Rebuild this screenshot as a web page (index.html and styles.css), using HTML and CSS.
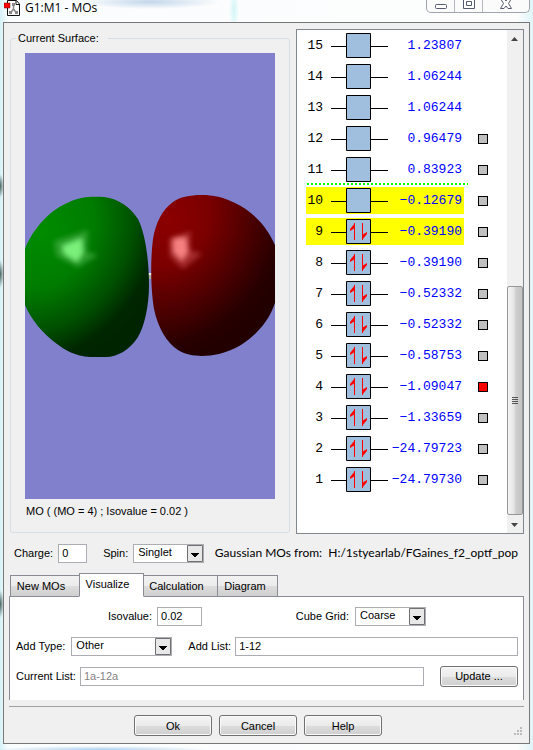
FILE: index.html
```
<!DOCTYPE html>
<html lang="en">
<head>
<meta charset="utf-8">
<title>G1:M1 - MOs</title>
<link rel="stylesheet" href="styles.css">
</head>
<body>
<header class="titlebar">
  <svg class="app-icon" width="16" height="16" viewBox="0 0 16 16" aria-hidden="true">
    <path d="M3.500.5H12.500L15.500 4V15.500H3.500Z" fill="#fff" stroke="#111"/>
    <path d="M12 1v3.500h3" fill="none" stroke="#111"/>
    <path d="M9.500 4v5M9.500 9l-3 4M9.500 9l3 4" stroke="#888" stroke-width="1.500"/>
    <path d="M8 3h3v3h-3zM5 11h3v3h-3zM11 11h3v3h-3z" fill="#888"/>
    <path d="M0 3h6v5H0z" fill="#f00" stroke="#600" stroke-width=".5"/>
  </svg>
  <h1>G1:M1 - MOs</h1>
  <div class="caption-buttons">
    <button type="button" aria-label="Minimize"><svg width="12" height="12" viewBox="0 0 12 12"><rect x=".5" y="6.500" width="11" height="4" rx="1" fill="#fff" stroke="#555b6e"/></svg></button>
    <button type="button" aria-label="Maximize"><svg width="12" height="12" viewBox="0 0 12 12"><path d="M.5-2.500h11v13H.5zM3.500 3.500h5v4h-5z" fill="#fff" stroke="#555b6e"/></svg></button>
    <button type="button" class="close" aria-label="Close"><svg width="12" height="12" viewBox="0 0 12 12"><path d="M.5.5h3.500L6 3 8 .5h3.500L8.500 5.500l3 5H8L6 8 4 10.500H.5l3-5z" fill="#fff" stroke="#555b6e"/></svg></button>
  </div>
</header>
<main class="dialog">
  <div class="views">
    <fieldset class="surface">
      <legend>Current Surface:</legend>
      <svg class="canvas" viewBox="25 53 250 446" role="img" aria-label="Molecular orbital surface">
        <defs>
          <radialGradient id="green" gradientUnits="userSpaceOnUse" cx="42" cy="231" r="125" gradientTransform="rotate(32 42 231) scale(1 1.200) translate(0 -38)">
            <stop offset="0" stop-color="#008c00"/><stop offset=".4" stop-color="#007c00"/><stop offset=".7" stop-color="#005000"/><stop offset=".9" stop-color="#002700"/><stop offset="1" stop-color="#002400"/>
          </radialGradient>
          <radialGradient id="red" gradientUnits="userSpaceOnUse" cx="168" cy="222" r="126" gradientTransform="rotate(32 168 222) scale(1 1.200) translate(0 -37)">
            <stop offset="0" stop-color="#8c0000"/><stop offset=".3" stop-color="#7c0000"/><stop offset=".6" stop-color="#500000"/><stop offset=".88" stop-color="#270000"/><stop offset="1" stop-color="#220000"/>
          </radialGradient>
          <filter id="soft" x="-50%" y="-50%" width="200%" height="200%"><feGaussianBlur stdDeviation="2.500"/></filter>
        </defs>
        <rect x="25" y="53" width="250" height="446" fill="#8080cc"/>
        <path d="M147 273h6v6h-6z" fill="#aaa"/><path d="M147 273h6v2h-6z" fill="#eee"/>
        <path d="M25 249C33 228 50 211 65 204C78 197 90 196 104 197C119 199 130 207 138 219C146 235 149 263 149 285C149 307 144 327 138 337C130 350 117 357 106 357H90C75 356 65 350 57 344C42 333 31 319 25 305Z" fill="url(#green)"/>
        <path d="M275 245C266 224 250 210 235 203C223 197 213 195 202 195C189 195 180 197 173 202C162 210 156 222 153 239C150 262 151 291 154 309C158 328 167 343 178 350C189 357 205 357 219 354C235 350 247 342 256 333C266 323 271 314 275 303Z" fill="url(#red)"/>
        <g filter="url(#soft)">
          <path d="M54 241L88 230L87 252L98 255L78 267L56 256Z" fill="#3ba83b" opacity=".75"/>
          <path d="M62 246L82 238L83 253L77 262L64 254Z" fill="#8f8" opacity=".85"/>
          <path d="M169 239L191 231L190 250L202 254L183 269L170 257Z" fill="#b63b3b" opacity=".7"/>
          <path d="M173 238L186 237L188 252L182 261L173 252Z" fill="#f88" opacity=".9"/>
        </g>
      </svg>
      <p>MO ( (MO = 4) ; Isovalue = 0.02 )</p>
    </fieldset>
    <section class="levels" aria-label="Orbital energies">
      <ol id="orbitals"></ol>
      <div class="scrollbar" aria-hidden="true">
        <svg width="16" height="16" viewBox="0 0 16 16"><path d="M4 11L7.500 7L11 11Z" fill="#444"/></svg>
        <div class="thumb"><i></i><i></i><i></i><i></i></div>
        <svg width="16" height="16" viewBox="0 0 16 16"><path d="M4 6L7.500 10L11 6Z" fill="#444"/></svg>
      </div>
    </section>
  </div>
  <div class="state">
    <label for="charge">Charge:</label><input id="charge" value="0">
    <label for="spin">Spin:</label><select id="spin"><option>Singlet</option></select>
    <span class="source">Gaussian MOs from:&nbsp; H:/1styearlab/FGaines_f2_optf_pop</span>
  </div>
  <div class="tabs" role="tablist">
    <button type="button" role="tab">New MOs</button>
    <button type="button" role="tab" class="active" aria-selected="true">Visualize</button>
    <button type="button" role="tab" class="wide">Calculation</button>
    <button type="button" role="tab">Diagram</button>
  </div>
  <section class="tab-panel" role="tabpanel">
    <div class="row grid-row">
      <label for="iso">Isovalue:</label><input id="iso" value="0.02">
      <label for="cube" class="cube-label">Cube Grid:</label><select id="cube"><option>Coarse</option></select>
    </div>
    <div class="row">
      <label for="type">Add Type:</label><select id="type"><option>Other</option></select>
      <label for="list" class="list-label">Add List:</label><input id="list" class="grow" value="1-12">
    </div>
    <div class="row">
      <label for="current">Current List:</label><input id="current" class="grow" value="1a-12a" disabled>
      <button type="button" class="push update">Update ...</button>
    </div>
  </section>
  <footer class="actions">
    <button type="button" class="push">Ok</button>
    <button type="button" class="push">Cancel</button>
    <button type="button" class="push">Help</button>
    <svg class="grip" width="9" height="9" viewBox="0 0 9 9" aria-hidden="true"><path d="M6 0h2v2H6zM3 3h2v2H3zM6 3h2v2H6zM0 6h2v2H0zM3 6h2v2H3zM6 6h2v2H6z" fill="#bbb"/></svg>
  </footer>
</main>
<script src="orbitals.js"></script>
</body>
</html>
```
FILE: styles.css
```
* { box-sizing: border-box; }
body {
  margin: 0;
  padding: 0 3px 6px;
  min-height: 100vh;
  display: flex;
  flex-direction: column;
  font: 11px/14px "Liberation Sans", sans-serif;
  color: #000;
  background:
    radial-gradient(ellipse 4px 12px at 0 186px, #46605a, transparent),
    radial-gradient(ellipse 4px 14px at 0 274px, #46605a, transparent),
    radial-gradient(ellipse 4px 14px at 0 604px, #46605a, transparent),
    radial-gradient(ellipse 70px 7px at 150px 2px, #c3d6ea, transparent),
    radial-gradient(ellipse 110px 4px at 100px 100%, #a9cdec, transparent),
    radial-gradient(ellipse 5px 24px at 234px 10px, #d3f5f7, transparent),
    linear-gradient(90deg, #d5f2f8 0, #fafdfe 8px, #fdfdfd 97%, #dff4f8 100%);
}
button, input, select { font: inherit; color: inherit; margin: 0; }
.titlebar { display: flex; align-items: flex-start; height: 22px; padding-left: 1px; }
.titlebar h1 { margin: 0 auto 0 5px; font: 12px/16px "Open Sans", sans-serif; }
.caption-buttons {
  display: flex;
  height: 13px;
  border: 1px solid #a0a4ac;
  border-top: 0;
  border-radius: 0 0 5px 5px;
  background: #fbfbfc;
}
.caption-buttons button {
  width: 28px;
  height: 12px;
  padding: 0;
  border: 0;
  border-right: 1px solid #b5b8bf;
  background: none;
  line-height: 0;
}
.caption-buttons svg { display: block; margin: -4px auto 0; }
.caption-buttons .close { width: 46px; border: 0; }
.dialog {
  flex: 1;
  display: flex;
  flex-direction: column;
  padding: 6px 5px 0;
  border: 1px solid #777;
  background: #f0f0f0;
}
.views { display: flex; gap: 6px; }
.surface {
  flex: 1;
  min-width: 0;
  margin: 2px 0 1px 1px;
  padding: 8px 14px 14px;
  border: 1px solid #d5dfe5;
  border-radius: 3px;
}
.surface legend { height: 14px; margin-left: -9px; padding: 0 9px 0 2px; }
.canvas { display: block; width: 100%; }
.surface p { margin: 5px 1px 0; }
.levels {
  flex: 0 0 228px;
  display: flex;
  justify-content: space-between;
  border: 1px solid #82878f;
  background: #fff;
}
.levels ol {
  display: flex;
  flex-direction: column;
  gap: 4px;
  margin: 0;
  padding: 2px 0 0 9px;
  list-style: none;
}
.orbital {
  position: relative;
  display: flex;
  align-items: center;
  height: 27px;
  font: 13px/27px "Liberation Mono", monospace;
}
.level { display: flex; align-items: center; width: 158px; height: 27px; padding-right: 2px; }
.highlight { background: #ff0; }
.number { width: 17px; margin-right: 8px; text-align: right; }
.energy { flex: 1; color: #00f; text-align: right; }
.level svg { flex: none; margin-right: -8px; }
.mark { width: 10px; height: 10px; margin-left: 14px; border: 1px solid #000; background: #c0c0c0; }
.mark.selected { background: #f00; }
.lumo::before {
  content: "";
  position: absolute;
  top: -4px;
  left: 1px;
  width: 161px;
  height: 2px;
  background: repeating-linear-gradient(90deg, #0f0 0 2px, #fff 2px 4px);
}
.scrollbar { display: flex; flex-direction: column; width: 16px; background: #f0f0f0; }
.thumb {
  display: flex;
  flex-direction: column;
  justify-content: center;
  align-items: center;
  gap: 1px;
  height: 229px;
  margin: auto 0 2px;
  border: 1px solid #979797;
  border-radius: 2px;
  background: linear-gradient(90deg, #f5f5f5, #e3e3e3 45%, #cfcfcf 55%, #c3c3c3);
}
.thumb i { width: 6px; height: 1px; background: #555; }
.state { display: flex; align-items: center; margin: 9px 6px 0 5px; height: 20px; }
input, select {
  height: 19px;
  border: 1px solid #abadb3;
  border-radius: 0;
  background: #fff;
}
input { padding: 0 3px; min-width: 0; }
select {
  appearance: none;
  padding: 0 4px 2px;
  background: #fff url("data:image/svg+xml,%3Csvg xmlns='http://www.w3.org/2000/svg' width='16' height='17'%3E%3Cpath d='M.5.5h15v16H.5z' fill='%23e8e8e8' stroke='%23707070'/%3E%3Cpath d='M4 8h8v1H4zM5 9h6v1H5zM6 10h4v1H6zM7 11h2v1H7z'/%3E%3C/svg%3E") no-repeat right top;
}
#charge { width: 29px; margin: 0 16px 0 5px; }
#spin { width: 71px; margin-left: 5px; }
.source { margin-left: auto; font: 12px/16px Lato, "Open Sans", sans-serif; white-space: nowrap; }
.tabs { display: flex; align-items: flex-end; height: 24px; margin: 10px 0 -1px 1px; }
.tabs button {
  position: relative;
  height: 22px;
  width: 61px;
  padding: 0 5px 1px 0;
  margin-left: -1px;
  border: 1px solid #898c95;
  background: linear-gradient(#f2f2f2, #ebebeb 50%, #ddd 50%, #cfcfcf);
}
.tabs button:first-child { width: 70px; margin-left: 0; padding-right: 8px; }
.tabs .active { width: 65px; height: 24px; padding: 0 8px 3px 0; background: #fff; border-bottom-color: #fff; z-index: 1; }
.tabs .wide { width: 75px; padding-right: 8px; }
.tab-panel {
  display: flex;
  flex-direction: column;
  gap: 8px;
  padding: 8px 5px 13px 6px;
  border: 1px solid #898c95;
  border-bottom: 0;
  background: #fff;
}
.row { display: flex; align-items: center; height: 22px; }
.grow { flex: 1; }
.grid-row { padding-left: 92px; }
#iso { width: 45px; margin-left: 5px; }
.cube-label { margin-left: auto; }
#cube { width: 71px; margin: 0 92px 0 6px; }
#type { width: 101px; margin-left: 6px; }
.list-label { margin: 0 4px 0 16px; }
#current { margin-left: 4px; color: #838383; }
.push {
  width: 78px;
  height: 21px;
  padding: 0;
  border: 1px solid #707070;
  border-radius: 3px;
  background: linear-gradient(#f4f4f4, #ebebeb 50%, #ddd 50%, #cfcfcf);
  box-shadow: inset 0 0 0 1px #fbfbfb;
}
.update { margin-left: 16px; }
.actions {
  position: relative;
  display: flex;
  justify-content: center;
  gap: 7px;
  margin-top: 6px;
  padding: 8px 17px 7px 0;
  border-top: 1px solid #a0a0a0;
}
.grip { position: absolute; right: 1px; bottom: 7px; }
```
FILE: orbitals.js
```
const energies = [
  [15, "1.23807"], [14, "1.06244"], [13, "1.06244"], [12, "0.96479"],
  [11, "0.83923"], [10, "−0.12679"], [9, "−0.39190"], [8, "−0.39190"],
  [7, "−0.52332"], [6, "−0.52332"], [5, "−0.58753"], [4, "−1.09047"],
  [3, "−1.33659"], [2, "−24.79723"], [1, "−24.79730"]
];
const electrons = '<path d="M23.500 4v17M31.500 4v17" stroke="#f00"/><path d="M24 4v5l-5 3v-2zM31 21v-5l5-3v2z" fill="#f00"/>';
document.getElementById("orbitals").innerHTML = energies.map(([n, e]) => `
  <li class="orbital${n === 10 ? " lumo" : ""}">
    <div class="level${n === 10 || n === 9 ? " highlight" : ""}">
      <span class="number">${n}</span>
      <svg width="57" height="25" viewBox="0 0 57 25"><path d="M0 13.500h57" stroke="#000"/><path d="M15.500.5h24v24h-24z" fill="#a0bede" stroke="#000"/>${n < 10 ? electrons : ""}</svg>
      <span class="energy">${e}</span>
    </div>
    ${n <= 12 ? `<span class="mark${n === 4 ? " selected" : ""}"></span>` : ""}
  </li>`).join("");
```
